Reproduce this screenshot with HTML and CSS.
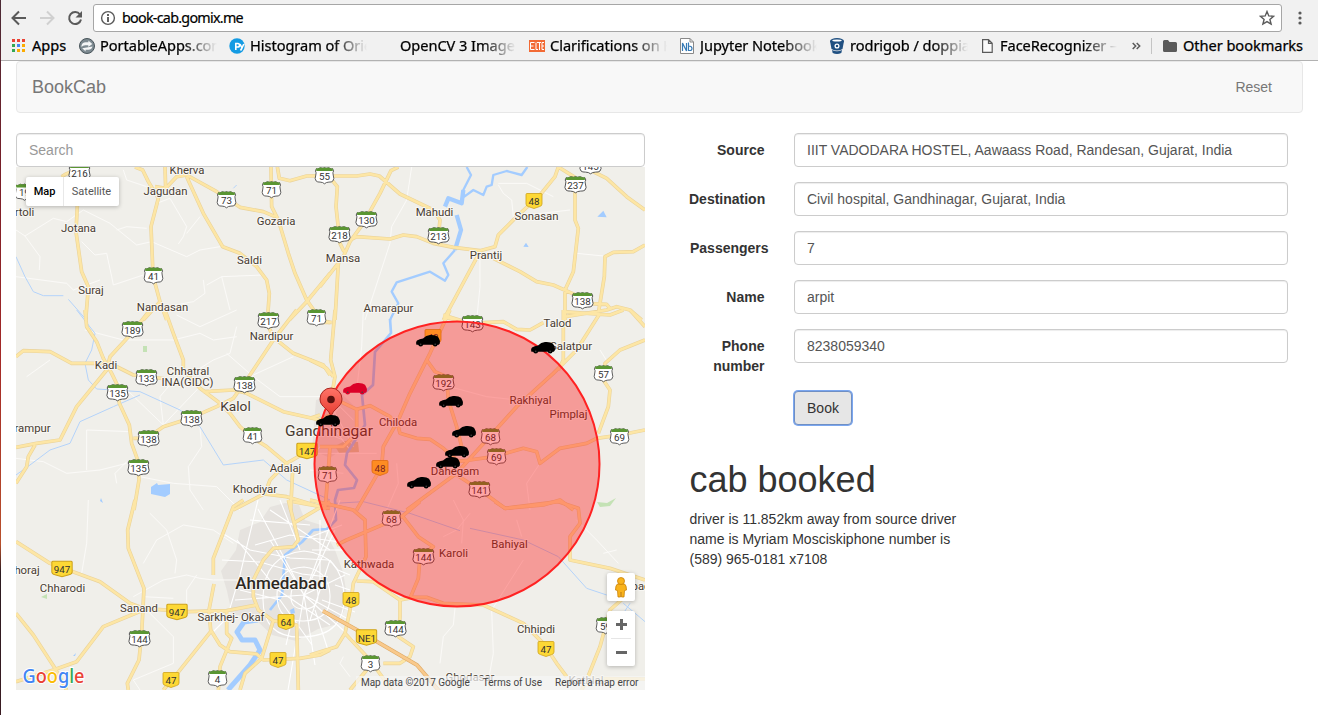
FILE: index.html
```html
<!DOCTYPE html>
<html lang="en">
<head>
<meta charset="utf-8">
<title>BookCab</title>
<link rel="stylesheet" href="styles.css">
</head>
<body>
<div class="window">
<header class="chrome">
  <div class="toolbar">
    <svg class="nav-icons" width="93" height="36" fill="none" stroke="#5a5a5a" stroke-width="2">
      <path d="M26 18H13M19 11.500l-6.500 6.500 6.500 6.500"/>
      <path stroke="#d0d0d0" d="M40 18h13M47 11.500l6.500 6.500-6.500 6.500"/>
      <path d="M80 14.500A6 6 0 1 0 81 19.500"/><path fill="#5a5a5a" stroke="none" d="M82 11v6.500h-6.500z"/>
    </svg>
    <div class="address">
      <svg width="16" height="16" viewBox="0 0 16 16" fill="none" stroke="#5a5a5a"><circle cx="8" cy="8" r="6.400" stroke-width="1.400"/><path stroke-width="1.900" d="M8 7v5M8 4v2"/></svg>
      <span class="url">book-cab.gomix.me</span>
      <svg class="star" width="16" height="16" viewBox="0 0 16 16" fill="none" stroke="#5a5a5a" stroke-width="1.400"><path d="M8 1.500l1.800 4.400 4.800.4-3.700 3.100 1.200 4.700L8 11.600l-4.100 2.500 1.200-4.700L1.400 6.300l4.800-.4z"/></svg>
    </div>
    <svg class="menu-icon" width="4" height="16" fill="#5a5a5a"><circle cx="2" cy="3" r="1.600"/><circle cx="2" cy="8" r="1.600"/><circle cx="2" cy="13" r="1.600"/></svg>
  </div>
  <nav class="bookmarks">
    <a class="bm bm-apps"><svg width="14" height="14"><path fill="#ea4335" d="M0 0h3v3H0zM5 0h3v3H5zM10 0h3v3h-3z"/><path fill="#34a853" d="M0 5h3v3H0zM0 10h3v3H0z"/><path fill="#4285f4" d="M5 5h3v3H5z"/><path fill="#fbab00" d="M10 5h3v3h-3zM10 10h3v3h-3zM5 10h3v3H5z"/></svg><span>Apps</span></a>
    <a class="bm bm-portable"><svg width="16" height="16"><circle cx="8" cy="8" r="7.500" fill="#7d8a91" stroke="#48545a"/><path d="M2.500 7.500Q3.500 4 7 4.200h2.500L9.300 2.500l4 3.500-4 3V7.300H7Q4 7 2.500 9zM13.500 8.500Q12.500 12 9 11.800H6.500l.2 1.700-3.500-3.300" fill="#f4f6f7"/></svg><span class="fade">PortableApps.com</span></a>
    <a class="bm bm-hist"><svg width="16" height="16"><circle cx="8" cy="8" r="7.700" fill="#149be3"/><path d="M6.800 12V5.500h2a1.700 1.700 0 0 1 0 3.500h-2M11 6l2 4 1.800-4M13 10l-1.500 2.500" fill="none" stroke="#fff" stroke-width="1.600"/></svg><span class="fade">Histogram of Orien</span></a>
    <a class="bm bm-cv"><span class="fade">OpenCV 3 Image p</span></a>
    <a class="bm bm-elte"><svg width="16" height="12"><path fill="#f26a34" d="M0 0h16v12H0z"/><path fill="none" stroke="#fff" d="M5.500 2.500h-4v7h4M1.500 6h3M7 2.500v7h2M8 2.500h4M10.500 3v7M15 2.500h-2v7h2M13 6h2"/></svg><span class="fade">Clarifications on H</span></a>
    <a class="bm bm-nb"><svg width="14" height="16"><path fill="#fff" stroke="#888" d="M.5.500H10l3.500 3.500v11.500H.5zM10 .5V4h3.500"/><path fill="none" stroke="#367ab5" stroke-width="1.200" d="M2.500 13V5l4 8V5M8.500 4.500V12.500h1.700q1.800 0 1.800-2.200T8.500 8"/></svg><span class="fade">Jupyter Notebook</span></a>
    <a class="bm bm-bit"><svg width="14" height="16"><ellipse cx="7" cy="3" rx="7" ry="3" fill="#205081"/><path fill="#205081" d="M0 3l1.500 8Q7 14 12.500 11L14 3zM2 12q5 2.500 10 0l-.7 3Q7 17 2.700 15z"/><ellipse cx="7" cy="2.600" rx="4.700" ry="1" fill="#fff"/><circle cx="7" cy="8" r="1.900" fill="none" stroke="#fff" stroke-width="1.300"/></svg><span class="fade">rodrigob / doppia</span></a>
    <a class="bm bm-face"><svg width="11" height="14"><path fill="#fafafa" stroke="#5a5a5a" stroke-width="1.200" d="M.6.600H6.500l3.700 3.700v9H.6zM6.500.600v3.700h3.700"/></svg><span class="fade">FaceRecognizer — O</span></a>
    <svg class="more" width="9" height="8" fill="none" stroke="#5a5a5a" stroke-width="1.500"><path d="M.7 1l3 3-3 3M4.700 1l3 3-3 3"/></svg>
    <i class="divider"></i>
    <a class="bm bm-other"><svg width="14" height="12"><path fill="#5a5a5a" d="M0 1.500Q0 0 1.500 0H5l1.500 2h6Q14 2 14 3.500v7q0 1.500-1.500 1.500h-11Q0 12 0 10.500z"/></svg><span>Other bookmarks</span></a>
  </nav>
</header>

<main class="page">
  <div class="navbar"><span class="brand">BookCab</span><span class="reset">Reset</span></div>
  <div class="columns">
    <section class="map-col">
      <input class="control" placeholder="Search">
      <div class="map">
        <svg class="map-art" viewBox="16 167 629 523" width="629" height="523">
          <defs>
            <g id="roads">
              <path transform="translate(0 120) scale(.33333)" d="M185 170Q205 155 240 150M232 200V258L228 335 245 455 265 500 262 540 257 600M405 141L428 150 445 185 475 235 453 320 458 440 465 490 480 545 500 600M495 141L497 205 530 170 560 165 650 215 720 262 790 275 825 290M465 200L497 205M560 170L610 280 668 380 720 400 770 440 800 480 808 520 803 590M813 141L815 260 835 300 865 400 885 460 920 540 955 590M832 141L838 175 870 182 920 168 990 167M990 460L920 545 868 600M480 545L430 600"/>
              <path transform="translate(320 120) scale(.33333)" d="M0 168H110L150 162 178 168 240 222 340 270 360 300 355 350M20 160L52 200 48 260 60 370 72 395M235 141L213 152 180 220 130 310 90 365 70 410 0 500M55 430L45 600M90 360L110 350 210 357 250 345 290 350 340 370 400 382 480 392 525 380 535 345 590 290 660 225 705 170 715 141M715 141L765 172V300L775 325 760 455 735 510V600M810 150L860 175 920 230 975 270M480 395L370 600M520 415L600 455 650 485 700 495 790 535M975 375L940 395 880 397 855 410 853 470 835 580M735 590L860 570 890 560 930 570 965 600M790 550L860 553 870 565M370 590L410 600"/>
              <path transform="translate(0 310) scale(.33333)" d="M255 0L260 50 290 95 310 145 335 190 352 225 358 280 388 345 395 400 413 450 417 510 402 600M450 0L395 70 330 140 320 180 230 290 180 390 110 400 48 412M48 140L70 122 150 125 215 160 300 160 340 165 400 195 500 207M105 405L85 440 80 470 48 520M495 0L520 70 550 150V180L600 235 660 280 690 310 720 350 760 385 800 410 860 460M610 245L700 240 740 250 850 305 960 330 990 315M890 0L820 90 750 195 700 265 650 290 570 325 490 350 440 385H400M830 90L880 130 970 165 990 195M805 50L825 90M950 25L990 38M860 460L895 440 930 425M860 460L810 510 795 550 700 600M878 480L872 600M780 550L860 560 960 590"/>
              <path transform="translate(310 310) scale(.33333)" d="M75 0L62 150 75 200 68 240M0 37H65M0 150L50 175 70 200M60 260L140 298 180 287 240 320 265 350 270 370 320 385 360 388 400 415 440 450M420 0L360 130 300 250 265 330 220 410 215 470 140 600M350 150L375 185 410 200 415 270 440 350 455 410M290 600L440 490 620 290 730 190 800 120 870 10M400 15L480 40 580 35 620 58 660 60 700 38M760 0V150L745 180M760 5L900 15 940 0M960 0L1005 50M1005 90L930 120 885 160 880 210 900 240 895 290 865 370M1005 360L930 375 860 385 830 400 750 415 690 460 680 425 640 415 550 440 480 450 440 455M440 495L510 540 585 595 700 585 750 570 790 600M140 298V370L100 410 30 410M60 410L55 480 45 600M0 325L30 315"/>
              <path transform="translate(0 500) scale(.33333)" d="M405 0L383 90 385 145 432 265 425 400 417 480 382 550 385 570M48 125L150 190 300 245 390 310 430 325 560 335 680 332 770 315M430 330L310 380 230 485 160 510 48 545M48 340L100 405 165 505 200 570M730 0L700 20 640 175V225M642 252L627 330 632 390 660 435 690 455 770 462 790 480 900 475 960 465 990 450M632 395L520 535 490 570M680 330V400L695 415 660 500 655 570M865 0L895 120 880 140 820 145 790 180 760 240V290L775 330 820 362 890 375 895 570M820 362L785 475 735 520 720 570M990 5L880 70M880 5L990 25"/>
              <path transform="translate(310 500) scale(.33333)" d="M0 0L130 30 165 60 168 170 130 250 120 330 105 400 80 440 0 465M140 243L190 245 270 300V350L265 410 310 440 300 470 270 490H220M270 300L310 292H350L400 310 520 315 640 370 700 430 740 490 770 530M330 5L275 50 110 120 80 135M275 45L325 110 370 140 330 170 325 235 300 295M555 5L585 25 745 5 805 25 810 70 780 110V180L900 205 1005 240M985 255L900 330 870 440 830 540 815 570M105 400L180 480 245 570M120 570L170 510M820 535L1005 537"/>
            </g>
            <g id="s3"><path d="M-9.300-6.800Q-7.500-6-6-7.300-5-8.300-3.500-7.500-1.500-6.800 0-8 1.500-6.800 3.500-7.500 5-8.300 6-7.300 7.500-6 9.300-6.800L10.300-4.500Q9-3 9.900-.5 11.500 3.500 9.500 5.500 8 6.800 5 6.600 1.800 6.700 0 8.300-1.800 6.700-5 6.600-8 6.800-9.500 5.500-11.500 3.500-9.900-.5-9-3-10.300-4.500z" fill="#fff" stroke="#555"/><path d="M-9.600-7.200Q-8-6.500-6-7.600-3.500-8.400-2-7.400L0-8 2-7.400Q3.500-8.400 6-7.600 8-6.500 9.600-7.200L9.300-4.400H-9.300z" fill="#5a9632"/></g>
            <g id="s2"><use href="#s3" transform="scale(.88 1)"/></g>
            <g id="y2"><path d="M-8-6.500Q-8-7.500-7-7.500H7Q8-7.500 8-6.500V3Q8 5 5.500 5.600L0 7.500-5.500 5.600Q-8 5-8 3z" fill="#fdd835" stroke="#cda21a" stroke-width=".8"/></g>
            <g id="y3"><use href="#y2" transform="scale(1.270 1.030)"/></g>
            <g id="car"><path d="M.2 9.500Q-.3 6.500 1 5.500 3.500 4 7 3.600 10 .4 14 .1 19.500-.3 22 1.700L23.200 4Q24.500 6 23.800 8.500L22.800 9.800H1z"/><circle cx="4.700" cy="9.200" r="2.400"/><circle cx="19.200" cy="9.200" r="2.400"/><circle cx="4.700" cy="9.200" r=".8" fill="#444"/><circle cx="19.200" cy="9.200" r=".8" fill="#444"/></g>
            <linearGradient id="pinfill" x2="0" y2="1"><stop stop-color="#ff7468"/><stop offset="1" stop-color="#e5382c"/></linearGradient>
          </defs>
          <rect x="16" y="167" width="629" height="523" fill="#f0efea"/>

          <g class="urban">
            <path d="M285 503l14 2 6 15 16 5 14 25 8 22 5 30-10 22-20 5-22 12-24-6-18-17-22-4-5-23-6-20 15-21 4-20 20-8 10-15z"/>
            <path d="M316 400l24-8 18 18-4 30-24 18-18-8z"/>
            <path fill="#d9cfae" d="M335 446l10-5 13 1 1 10-20 1z"/>
          </g>
          <g class="green"><path d="M143 346h4v6h-4zM597 502l10 1 9-5-6 8-10 1zM41 597l6-3v5z"/></g>
          <g class="minor">
            <path transform="translate(0 120) scale(.33333)" d="M48 330L75 348 160 295 200 305 250 270 330 310 410 375 455 365 560 410 600 390 660 380M75 348L120 410 118 450M245 365L285 405 320 400 335 470 340 495 430 465M350 330L380 320 440 325M470 250L510 235 560 320 550 350 535 372M48 470L200 490 220 510 300 480M610 480L615 520 580 545 500 560M620 495L665 470 790 465M665 470L690 570M370 150L380 180 440 200M560 340L600 290"/>
            <path transform="translate(320 120) scale(.33333)" d="M275 141L260 240 215 320 210 370 135 600M480 420V500L470 600M535 195L550 220 575 240 580 290 750 270M535 190L620 190 700 230M770 400L850 408"/>
            <path transform="translate(0 310) scale(.33333)" d="M255 60L370 90 520 90 600 70 640 90 710 80M530 15L600 50 710 0M680 130L760 200 840 260 990 260M760 195L880 140M600 175L640 150 690 130 710 50M355 215L490 345 480 260 530 200M490 345L600 230M48 445L130 455 200 490 300 480 380 460M420 500L520 520 650 530 720 600M600 350L605 410 565 470 570 540 610 600M80 200L150 150M260 480L260 360 390 365M350 520L345 490 380 455"/>
            <path transform="translate(310 310) scale(.33333)" d="M160 0L155 110 140 240M400 225L530 260 620 270M260 460L265 520 230 600M690 460L650 520 660 600M0 430H200M30 410L0 450M60 340L120 420M40 350L90 290 130 330M50 370L100 390M70 300L130 410M870 120L895 160M0 480L100 490"/>
            <path transform="translate(0 500) scale(.33333)" d="M265 0L260 130 245 220M450 40L500 90 530 180 525 220M400 290L490 240 560 225 600 235 640 240 740 240M430 190L470 120 550 75 640 90 700 130M440 330L520 410V490L400 540M430 290L520 295M560 310V270L590 225M400 540L420 570"/>
            <path transform="translate(310 500) scale(.33333)" d="M480 40L440 90 400 110M620 60L635 110M640 180L545 330 550 460 530 570M435 325L430 375 400 410 390 490M800 60L860 120 925 190M880 160L920 150M100 470L90 490 120 530M430 0L460 60 455 130"/>
          </g>
          <g class="water">
            <path transform="translate(0 120) scale(.33333)" d="M48 410L75 470 100 515 130 527H190M205 538L255 595M700 205L710 195"/>
            <path transform="translate(0 310) scale(.33333)" d="M230 0L285 70 275 120 255 160 265 210 290 237 420 245 540 300 600 350 670 465 790 450 860 510 990 570M420 255L340 290 240 335 210 400 150 420 90 465 48 495"/>
            <path transform="translate(310 500) scale(.33333)" d="M75 10L160 5 300 40 450 92M480 85L640 120 745 170 830 265 890 285M940 310L1005 365M940 340L960 310"/>
            <g transform="translate(320 120) scale(.33333)"><path class="river" d="M440 141L453 165 430 210 433 230 460 210 490 225 500 200 515 195 520 165 560 153 605 165 622 141"/><path class="river wide" d="M430 210L425 250 385 235 375 260M410 285L423 330 405 390"/><path class="river" d="M405 390L370 430 385 465 375 482 330 455 230 487 215 515 235 550 210 600"/><path class="lake" d="M832 290l18-18 10 20zM610 380l8-12 8 13z"/></g>
            <path class="river" d="M390 319L391 333 375 352 373 385 362 395 365 425 347 453 345 465 357 480 354 488 338 490 335 500 336 520 327 529 313 530 302 542 285 555 282 595 270 610"/>
            <path class="river wide" d="M258 620L244 622 237 632 242 640 255 640 260 650 250 665 228 690"/>
            <path class="lake" d="M151 487l6-4 1 2 12-1v10l-5 3-14-3zM101 498l2 5-3-2zM290 610l4-2 1 5-4 1zM73 656l3-3-1 3z"/>
          </g>
          <g class="city">
            <path d="M258 500L240 575 227 618 211 634M222 560L260 562 302 574 328 577M222 533L250 550 290 558 329 560M237 540L278 590 330 625M304 595L340 500M304 595L258 509M304 595L235 600M304 595L354 640M304 595L345 575M304 595L315 665M304 595L288 690M304 595L270 540M304 595L335 530M304 595L350 620"/>
            <path d="M304 567Q329 570 330 595T304 621 277 595 304 567M304 580Q318 581 318 595T304 609 291 595 304 580M304 551Q342 555 344 595T304 637 263 597 304 551M270 510L300 530 330 550M250 520L310 525M255 545L290 535 340 542M280 500L300 550M320 520V580M240 590L280 600 312 645M330 560L310 620"/>
            <path d="M330 560L338 570 350 575M312 550H345M308 538L342 525M315 610L328 650M322 600L355 612M292 620L286 645M335 585L350 590"/>
          </g>
          <use href="#roads" class="road-edge"/>
          <use href="#roads" class="road"/>
          <path class="express-edge" d="M323 611L357 630 417 665 440 692"/><path class="express" d="M323 611L357 630 417 665 440 692"/>

          <g class="shields">
            <use href="#s3" x="79.500" y="172.500"/><use href="#s2" x="24.500" y="192"/><use href="#s2" x="324.500" y="175.500"/><use href="#s2" x="271.500" y="189.500"/><use href="#s2" x="226.500" y="199.500"/><use href="#s3" x="575.500" y="184.500"/><use href="#s3" x="590.500" y="165.500"/><use href="#s3" x="366.500" y="219.500"/><use href="#s3" x="339.500" y="234.500"/><use href="#s3" x="438.500" y="235.500"/><use href="#s2" x="153.500" y="275.500"/><use href="#s3" x="582.500" y="300.500"/><use href="#s2" x="316.500" y="317.500"/><use href="#s3" x="268.500" y="320.500"/><use href="#s3" x="132.500" y="329.500"/><use href="#s3" x="146.500" y="377.500"/><use href="#s3" x="244.500" y="384.500"/><use href="#s3" x="117.500" y="392.500"/><use href="#s3" x="191.500" y="418.500"/><use href="#s3" x="148.500" y="438.500"/><use href="#s2" x="252.500" y="435.500"/><use href="#s3" x="138.500" y="467.500"/><use href="#s3" x="472.500" y="323.500"/><use href="#s3" x="443.500" y="382.500"/><use href="#s2" x="603.500" y="373.500"/><use href="#s2" x="490.500" y="436.500"/><use href="#s2" x="496.500" y="456.500"/><use href="#s2" x="619.500" y="436.500"/><use href="#s3" x="479.500" y="489.500"/><use href="#s2" x="327.500" y="474.500"/><use href="#s2" x="391.500" y="518.500"/><use href="#s3" x="423.500" y="556.500"/><use href="#s3" x="395.500" y="628.500"/><use href="#s2" x="370.500" y="663.500"/><use href="#s3" x="139.500" y="638.500"/><use href="#s2" x="217.500" y="678.500"/><use href="#s2" x="605.500" y="625.500"/>
            <use href="#y2" x="534" y="201"/><use href="#y2" x="433" y="337"/><use href="#y3" x="307" y="451"/><use href="#y2" x="380" y="468"/><use href="#y3" x="62" y="569"/><use href="#y3" x="177" y="612"/><use href="#y2" x="278" y="660"/><use href="#y2" x="171" y="680"/><use href="#y2" x="286" y="622"/><use href="#y2" x="351" y="600"/><use href="#y3" x="366.500" y="637.500"/><use href="#y2" x="546" y="649"/>
            <text x="79.500" y="177">216</text><text x="24.500" y="196">19</text><text x="324.500" y="179.500">55</text><text x="271.500" y="193.500">71</text><text x="226.500" y="203.500">73</text><text x="575.500" y="188.500">237</text><text x="590.500" y="170">145</text><text x="366.500" y="223.500">130</text><text x="339.500" y="238.500">218</text><text x="438.500" y="239.500">213</text><text x="153.500" y="279.500">41</text><text x="582.500" y="304.500">138</text><text x="316.500" y="321.500">71</text><text x="268.500" y="324.500">217</text><text x="132.500" y="333.500">189</text><text x="146.500" y="381.500">133</text><text x="244.500" y="388.500">138</text><text x="117.500" y="396.500">135</text><text x="191.500" y="422.500">138</text><text x="148.500" y="442.500">138</text><text x="252.500" y="439.500">41</text><text x="138.500" y="471.500">135</text><text x="472.500" y="328">143</text><text x="443.500" y="386.500">192</text><text x="603.500" y="377.500">57</text><text x="490.500" y="440.500">68</text><text x="496.500" y="460.500">69</text><text x="619.500" y="440.500">69</text><text x="479.500" y="493.500">141</text><text x="327.500" y="478.500">71</text><text x="391.500" y="522.500">68</text><text x="423.500" y="560.500">144</text><text x="395.500" y="632.500">144</text><text x="370.500" y="667.500">3</text><text x="139.500" y="642.500">144</text><text x="217.500" y="682.500">4</text><text x="605.500" y="629.500">59</text><text x="534" y="204.500">48</text><text x="433" y="340.500">48</text><text x="307" y="454.500">147</text><text x="380" y="472">48</text><text x="62" y="572.500">947</text><text x="177" y="616">947</text><text x="278" y="663.500">47</text><text x="171" y="683.500">47</text><text x="286" y="625.500">64</text><text x="351" y="603.500">48</text><text x="367" y="641.500">NE1</text><text x="546" y="652.500">47</text>
          </g>
          <g class="towns">
            <text x="187" y="174">Kherva</text><text x="165.500" y="195">Jagudan</text><text x="24.500" y="216">rtoli</text><text x="78.500" y="232">Jotana</text><text x="276" y="225">Gozaria</text><text x="249.500" y="264">Saldi</text><text x="91" y="294">Suraj</text><text x="162.500" y="311">Nandasan</text><text x="434.500" y="216">Mahudi</text><text x="536.500" y="220">Sonasan</text><text x="343" y="261.500">Mansa</text><text x="486" y="259">Prantij</text><text x="388.500" y="312">Amarapur</text><text x="271.500" y="340">Nardipur</text><text x="106" y="369">Kadi</text><text x="188" y="375">Chhatral</text><text x="187.500" y="386">INA(GIDC)</text><text class="big" x="235.500" y="411">Kalol</text><text x="32.500" y="432">rampur</text><text x="285.500" y="472">Adalaj</text><text x="255" y="493">Khodiyar</text><text class="big" x="329" y="436" style="font-size:15.500px">Gandhinagar</text><text x="398" y="426">Chiloda</text><text x="455" y="475">Dahegam</text><text x="557.500" y="327">Talod</text><text x="571" y="350">Salatpur</text><text x="530.500" y="404">Rakhiyal</text><text x="568.500" y="418">Pimplaj</text><text x="509.500" y="548">Bahiyal</text><text x="453.500" y="557">Karoli</text><text x="369" y="568">Kathwada</text><text x="27" y="574">horaj</text><text x="62.500" y="592">Chharodi</text><text x="139" y="612">Sanand</text><text x="231" y="621">Sarkhej- Okaf</text><text class="metro" x="281" y="589">Ahmedabad</text><text x="536" y="633">Chhipdi</text><text x="470" y="681">Ghodasar</text><text x="586" y="684">Kathlal</text><text x="641" y="590">bad</text>
          </g>
          <circle cx="457" cy="464" r="142.500" fill="#f00" fill-opacity=".35" stroke="#f22" stroke-width="2"/>
          <path d="M331 418C330 408 320 408 320 399A11 11 0 0 1 342 399C342 408 332 408 331 418z" fill="url(#pinfill)" stroke="#a8261e"/><circle cx="331" cy="399.500" r="3.800" fill="#5a120e"/>
          <g><use href="#car" x="416" y="335"/><use href="#car" x="531" y="342"/><use href="#car" x="343" y="383" fill="#dc0028"/><use href="#car" x="316" y="415"/><use href="#car" x="439" y="396"/><use href="#car" x="452" y="426"/><use href="#car" x="445" y="446"/><use href="#car" x="436" y="457"/><use href="#car" x="407" y="477"/></g>
          <text class="google" x="22.500" y="682.500" textLength="62" lengthAdjust="spacingAndGlyphs"><tspan fill="#4285f4">G</tspan><tspan fill="#ea4335">o</tspan><tspan fill="#fbbc05">o</tspan><tspan fill="#4285f4">g</tspan><tspan fill="#34a853">l</tspan><tspan fill="#ea4335">e</tspan></text>
        </svg>
        <div class="map-type"><b>Map</b><span>Satellite</span></div>
        <div class="map-tools">
          <div class="tool pegman"><svg width="14" height="21"><path d="M3.500 7Q1.500 8 1.500 13l2 .5.500 6.500h2.500L7 15l.5 5H10l.5-6.500 2-.5Q12.500 8 10.500 7z" fill="#f9b31c" stroke="#c98208" stroke-width=".8"/><circle cx="7" cy="4" r="3.500" fill="#f9b31c" stroke="#c98208" stroke-width=".8"/></svg></div>
          <div class="tool zoom"><svg width="28" height="55"><path d="M9 13.500h11M14.500 8v11M9 41.500h11" stroke="#666" stroke-width="3"/><path d="M4 27.500h20" stroke="#e6e6e6"/></svg></div>
        </div>
        <div class="credits"><span>Map data ©2017 Google</span><span>Terms of Use</span><span>Report a map error</span></div>
      </div>
    </section>
    <section class="form-col">
      <form>
        <label>Source</label><input class="control" value="IIIT VADODARA HOSTEL, Aawaass Road, Randesan, Gujarat, India">
        <label>Destination</label><input class="control" value="Civil hospital, Gandhinagar, Gujarat, India">
        <label>Passengers</label><input class="control" value="7">
        <label>Name</label><input class="control" value="arpit">
        <label>Phone number</label><input class="control" value="8238059340">
        <button class="book" type="button">Book</button>
      </form>
      <h1>cab booked</h1>
      <p>driver is 11.852km away from source driver name is Myriam Mosciskiphone number is (589) 965-0181 x7108</p>
    </section>
  </div>
</main>
</div>
</body>
</html>
```
FILE: styles.css
```css
* { box-sizing: border-box; }
body { margin: 0; background: #fff; color: #333; font: 14px/20px "Liberation Sans", Arial, sans-serif; }
.window { height: 715px; overflow: hidden; border-left: 1px solid; border-image: linear-gradient(#4a2a35, #7a1e28 25%, #a52a28 50%, #b8502c 76%, #2b1a20 80%, #3a1b22) 1; }
.chrome { height: 61px; margin-left: -1px; background: #f1f1f1; border-bottom: 1px solid #b2b2b2; font-family: "Noto Sans", sans-serif; color: #000; border-left: 1px solid #4a3038; }
.toolbar { display: flex; height: 36px; margin-left: -1px; }
.nav-icons { flex: none; }
.address { display: flex; align-items: center; width: 1189px; height: 28px; margin-top: 4px; padding: 0 6px; background: #fff; border: 1px solid #a6a6a6; border-radius: 3px; }
.url { margin-left: 6px; font-size: 14.3px; letter-spacing: -.72px; -webkit-text-stroke: .2px #000; }
.star { margin-left: auto; }
.menu-icon { margin: 10px 0 0 16px; }
.bookmarks { display: flex; align-items: center; height: 20px; margin-left: -1px; font-size: 14.6px; letter-spacing: -.05px; white-space: nowrap; -webkit-text-stroke: .25px #000; }
.bm { display: flex; flex: none; align-items: center; height: 20px; }
.bm svg { flex: none; }
.bm span { overflow: hidden; line-height: 20px; margin-top: -2px; }
.bm .fade { flex: 1; mask-image: linear-gradient(to left, transparent, #000 34px); }
.bm-apps { width: 67px; margin-left: 12px; gap: 6px; }
.bm-portable { width: 138px; gap: 5px; }
.bm-hist { width: 138px; margin-left: 12px; gap: 5px; }
.bm-cv { width: 116px; margin-left: 33px; }
.bm-elte { width: 138px; margin-left: 13px; gap: 5px; }
.bm-nb { width: 137px; margin-left: 13px; gap: 6px; }
.bm-bit { width: 138px; margin-left: 13px; gap: 6px; }
.bm-face { width: 135px; margin-left: 14px; gap: 7px; }
.more { margin-left: 15px; }
.divider { width: 1px; height: 16px; margin-left: 10px; background: #c4c4c4; }
.bm-other { margin-left: 11px; gap: 6px; }
.page { padding: 0 15px; }
.navbar { display: flex; justify-content: space-between; align-items: center; height: 52px; padding: 0 30px 0 15px; background: #f8f8f8; border: 1px solid #e7e7e7; border-radius: 4px; color: #777; }
.brand { font-size: 18px; }
.columns { display: flex; gap: 44px; margin-top: 20px; }
.map-col { width: 629px; }
.control { display: block; width: 100%; height: 34px; padding: 6px 12px; border: 1px solid #ccc; border-radius: 4px; background: #fff; color: #555; font: 14px/20px "Liberation Sans", Arial, sans-serif; box-shadow: inset 0 1px 1px rgba(0,0,0,.075); }
.control::placeholder { color: #999; opacity: 1; }
.map { position: relative; height: 523px; overflow: hidden; font-family: Roboto, sans-serif; }
.map-art { display: block; }
.urban { fill: #e6e3df; }
.green { fill: #c4e2b5; }
.minor { fill: none; stroke: #fbfaf8; stroke-width: 3; stroke-linejoin: round; }
.city { fill: none; stroke: #fff; stroke-width: 1.1; }
.water { fill: none; stroke: #b4d3fa; stroke-width: 3; stroke-linejoin: round; }
.water .river { stroke: #a3ccff; stroke-width: 7; }
.water > .river { stroke-width: 2.7; }
.water .wide { stroke-width: 13; }
.water > .wide { stroke-width: 5; }
.water .lake { fill: #a3ccff; stroke: none; }
.road-edge, .road { fill: none; stroke: #ead39a; stroke-width: 11; stroke-linejoin: round; }
.road { stroke: #fde6a5; stroke-width: 7.5; }
.express-edge { fill: none; stroke: #dfaa65; stroke-width: 4; }
.express { fill: none; stroke: #f9c98b; stroke-width: 2.7; }
.shields text { font-size: 9.8px; text-anchor: middle; fill: #333; }
.towns text { font-size: 11.35px; text-anchor: middle; fill: #483c32; stroke: #f8f7f4; stroke-width: 2px; paint-order: stroke; stroke-linejoin: round; }
.towns .big { font-size: 13.7px; }
.towns .metro { font-size: 17px; font-weight: 500; fill: #2d2822; }
.google { font: 500 20px "Noto Sans", sans-serif; stroke: #fff; stroke-width: 2px; paint-order: stroke; }
.map-type { position: absolute; left: 10px; top: 10px; display: flex; height: 29px; background: #fff; border-radius: 2px; box-shadow: 0 1px 4px rgba(0,0,0,.25); font-size: 11px; line-height: 29px; color: #565656; }
.map-type b { width: 38px; text-align: center; color: #000; font-weight: 500; border-right: 1px solid #e8e8e8; }
.map-type span { width: 55px; text-align: center; }
.map-tools { position: absolute; right: 10px; bottom: 24px; display: grid; gap: 10px; }
.tool { display: grid; place-items: center; width: 28px; height: 28px; background: #fff; border-radius: 2px; box-shadow: 0 1px 4px rgba(0,0,0,.25); }
.zoom { height: 55px; }
.credits { position: absolute; right: 0; bottom: 0; display: flex; gap: 13px; height: 14px; padding: 0 6.5px 0 5px; background: rgba(245,245,245,.72); font-size: 10px; line-height: 14px; color: #444; }
.form-col { width: 599px; }
form { display: grid; grid-template-columns: 75.5px 494px; column-gap: 28.5px; row-gap: 15px; align-items: start; }
label { padding-top: 7px; font-weight: 700; text-align: right; }
label:nth-of-type(3) { margin-left: 1px; }
form .control { margin-left: 1px; }
.book { grid-column: 2; justify-self: start; width: 58px; height: 34px; margin-left: 1px; padding: 0; background: #e6e6e6; border: 1px solid #6f8fc4; border-radius: 4px; color: #333; font: 14px/20px "Liberation Sans", Arial, sans-serif; box-shadow: 0 0 0 1px #7ba7f0; }
h1 { margin: 35px 0 10px .5px; font-size: 36px; font-weight: 400; line-height: 39px; }
p { width: 275px; margin: 0 0 0 .5px; }
```
